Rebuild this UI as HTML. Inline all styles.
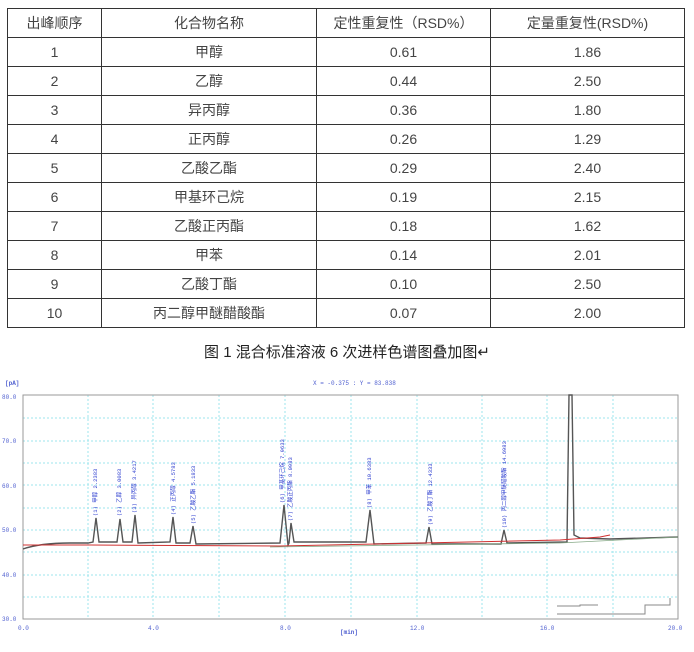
<!DOCTYPE html>
<html><head><meta charset="utf-8"><style>
body{margin:0;background:#fff;width:694px;height:652px;overflow:hidden;font-family:"Liberation Sans","Noto Sans CJK SC",sans-serif;}
table{position:absolute;left:7px;top:8px;border-collapse:collapse;width:678px;}
td{border:1px solid #333;height:28px;padding:0;text-align:center;font-size:14px;color:#444;}
.cap{position:absolute;top:341px;left:0;width:694px;text-align:center;font-size:15px;color:#222;}
svg{position:absolute;left:0;top:0}
</style></head><body>
<table>
<colgroup><col style="width:94px"><col style="width:215px"><col style="width:174px"><col></colgroup>
<tr><td>出峰顺序</td><td>化合物名称</td><td>定性重复性（RSD%）</td><td>定量重复性(RSD%)</td></tr>
<tr><td>1</td><td>甲醇</td><td>0.61</td><td>1.86</td></tr>
<tr><td>2</td><td>乙醇</td><td>0.44</td><td>2.50</td></tr>
<tr><td>3</td><td>异丙醇</td><td>0.36</td><td>1.80</td></tr>
<tr><td>4</td><td>正丙醇</td><td>0.26</td><td>1.29</td></tr>
<tr><td>5</td><td>乙酸乙酯</td><td>0.29</td><td>2.40</td></tr>
<tr><td>6</td><td>甲基环己烷</td><td>0.19</td><td>2.15</td></tr>
<tr><td>7</td><td>乙酸正丙酯</td><td>0.18</td><td>1.62</td></tr>
<tr><td>8</td><td>甲苯</td><td>0.14</td><td>2.01</td></tr>
<tr><td>9</td><td>乙酸丁酯</td><td>0.10</td><td>2.50</td></tr>
<tr><td>10</td><td>丙二醇甲醚醋酸酯</td><td>0.07</td><td>2.00</td></tr>
</table>
<div class="cap">图 1 混合标准溶液 6 次进样色谱图叠加图↵</div>
<svg width="694" height="652" font-family="Liberation Mono,monospace">
<g stroke="#9ee6ee" stroke-width="1" stroke-dasharray="2,2">
<line x1="88" y1="395" x2="88" y2="619"/><line x1="153" y1="395" x2="153" y2="619"/><line x1="219" y1="395" x2="219" y2="619"/><line x1="285" y1="395" x2="285" y2="619"/><line x1="351" y1="395" x2="351" y2="619"/><line x1="417" y1="395" x2="417" y2="619"/><line x1="482" y1="395" x2="482" y2="619"/><line x1="547" y1="395" x2="547" y2="619"/><line x1="613" y1="395" x2="613" y2="619"/>
<line x1="23" y1="418" x2="678" y2="418"/><line x1="23" y1="441" x2="678" y2="441"/><line x1="23" y1="463" x2="678" y2="463"/><line x1="23" y1="485" x2="678" y2="485"/><line x1="23" y1="508" x2="678" y2="508"/><line x1="23" y1="530" x2="678" y2="530"/><line x1="23" y1="552" x2="678" y2="552"/><line x1="23" y1="575" x2="678" y2="575"/><line x1="23" y1="597" x2="678" y2="597"/>
</g>
<rect x="23" y="395" width="655" height="224" fill="none" stroke="#999"/>
<g font-size="6" fill="#5060d0">
<text x="5" y="385" font-weight="bold">[pA]</text>
<text x="2" y="399">80.0</text><text x="2" y="443">70.0</text><text x="2" y="488">60.0</text><text x="2" y="532">50.0</text><text x="2" y="577">40.0</text><text x="2" y="621">30.0</text>
<text x="18" y="630">0.0</text><text x="148" y="630">4.0</text><text x="280" y="630">8.0</text><text x="410" y="630">12.0</text><text x="540" y="630">16.0</text><text x="668" y="630">20.0</text>
<text x="340" y="634" font-weight="bold">[min]</text>
<text x="313" y="385">X = -0.375 : Y = 83.838</text>
</g>
<path d="M23 549 Q40 543 70 543 L88 543 L93 542 L96 518 L99 542 L117 542 L120 519 L123 542 L132 542 L135 515 L138 543 L170 542 L173 517 L176 543 L190 543 L193 526 L196 544 L280 543 L284 505 L288 545 L289 543 L291 523 L294 542 L366 542 L370 510 L374 544 L426 543 L429 527 L432 544 L501 544 L504 530 L507 543 L567 542 L569 395 L572 395 L574 535 L580 538 L610 539 L678 537" fill="none" stroke="#555" stroke-width="1.4"/>
<path d="M23 545 L90 545 L280 546 L560 540 L600 537 L610 535" fill="none" stroke="#d03030" stroke-width="1"/>
<path d="M270 547 L560 543 L678 537" fill="none" stroke="#88aa88" stroke-width="0.8"/>
<g font-size="5.5" fill="#3040d0">
<text transform="translate(97,516) rotate(-90)">(1) 甲醇 2.2383</text>
<text transform="translate(121,516) rotate(-90)">(2) 乙醇 3.0083</text>
<text transform="translate(136,513) rotate(-90)">(3) 异丙醇 3.4217</text>
<text transform="translate(175,515) rotate(-90)">(4) 正丙醇 4.5783</text>
<text transform="translate(195,524) rotate(-90)">(5) 乙酸乙酯 5.1833</text>
<text transform="translate(284,503) rotate(-90)">(6) 甲基环己烷 7.9633</text>
<text transform="translate(292,521) rotate(-90)">(7) 乙酸正丙酯 8.0983</text>
<text transform="translate(371,508) rotate(-90)">(8) 甲苯 10.6383</text>
<text transform="translate(432,525) rotate(-90)">(9) 乙酸丁酯 12.4333</text>
<text transform="translate(506,528) rotate(-90)">(10) 丙二醇甲醚醋酸酯 14.6983</text>
</g>
<path d="M557 614 L645 614 L645 605 L670 605 L670 598 M557 606 L580 606 L580 605 L598 605" fill="none" stroke="#888"/>
</svg>
</body></html>
